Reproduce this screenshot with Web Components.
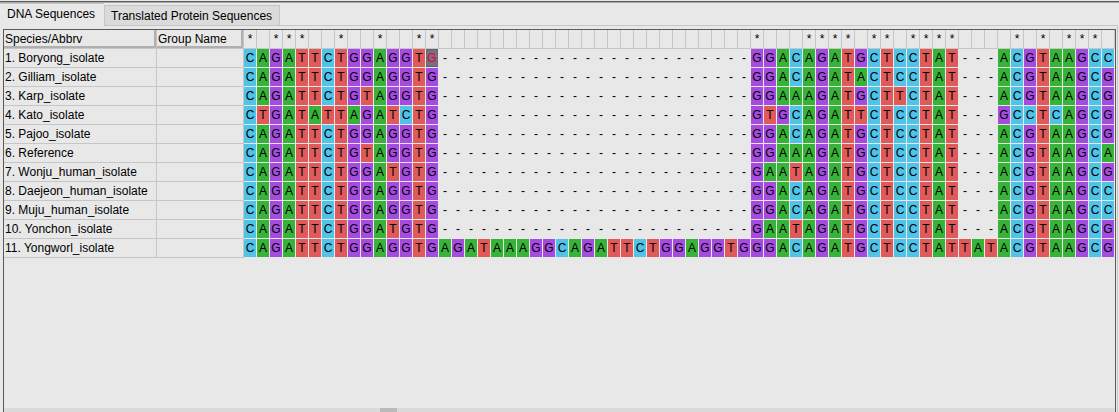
<!DOCTYPE html>
<html lang="en">
<head>
<meta charset="utf-8">
<title>Alignment Explorer</title>
<style>
html, body { height: 100%; margin: 0; }
body { background: #e8e8e8; color: #000; font: 12px/18px "Liberation Sans", Arial, sans-serif; overflow: hidden; }
</style>
</head>
<body>
<alignment-window>
  <tab-strip slot="tabs">
    <tab-item selected>DNA Sequences</tab-item>
    <tab-item>Translated Protein Sequences</tab-item>
  </tab-strip>
  <sequence-grid></sequence-grid>
  <scroll-track slot="scroll"></scroll-track>
</alignment-window>

<template id="window-template">
<style>
:host { display: flex; flex-direction: column; height: 100vh; box-sizing: border-box; padding-top: 1px; }
.rule { height: 1px; flex: none; background: #5c5e5c; border-bottom: 1px solid #a9a9a9; }
.panel { flex: 1; min-height: 0; display: flex; border-right: 1px solid #c6c6c6; margin-right: 1px; padding: 3px 1px 0 3px; }
.frame { flex: 1; min-width: 0; display: flex; flex-direction: column; box-sizing: border-box; border: 1px solid #5a5a5a; border-bottom: 0; overflow: hidden; }
.content { flex: 1; min-height: 0; overflow: hidden; }
</style>
<div class="rule"></div>
<slot name="tabs"></slot>
<div class="panel"><div class="frame"><div class="content"><slot></slot></div><slot name="scroll"></slot></div></div>
</template>

<template id="strip-template">
<style>
:host { display: flex; flex: none; height: 23px; margin-right: 1px; }
.rest { flex: 1; border-bottom: 1px solid #c6c6c6; }
</style>
<slot></slot><div class="rest"></div>
</template>

<template id="tab-template">
<style>
:host { display: flex; align-items: flex-end; border-bottom: 1px solid #c6c6c6; }
:host([selected]) { align-items: stretch; border-bottom-color: transparent; }
button { font: inherit; color: inherit; height: 20px; padding: 0 7px 0 6px; border: 1px solid #c6c6c6; border-bottom: 0; background: #dbdbdb; white-space: nowrap; }
:host([selected]) button { height: 22px; padding: 0 9px 2px 7px; border: 0; border-top: 1px solid #c6c6c6; background: #e8e8e8; }
</style>
<button type="button" role="tab"><slot></slot></button>
</template>

<template id="grid-template">
<style>
:host { display: block; }
table { border-collapse: separate; border-spacing: 0; table-layout: fixed; width: 1111px; }
.name { width: 153px; } .group { width: 87px; } .site { width: 13px; }
th, td { box-sizing: border-box; height: 19px; padding: 0; font-weight: normal; line-height: 18px; white-space: nowrap; border: solid #c6c6c6; border-width: 0 1px 1px 0; text-align: left; }
.label { padding-left: 1px; }
thead .label { box-shadow: inset -2px -2px #b0b0b0; }
.mark, .base { text-align: center; }
.base { border-color: #e8e8e8; background-clip: padding-box; }
.A { background-color: #37b437; } .C { background-color: #4fc3e8; }
.G { background-color: #a64be0; } .T { background-color: #e05a5a; }
.current { background: linear-gradient(#746f83, #746f83) 1px 1px / 10px 16px no-repeat padding-box, repeating-linear-gradient(#5e6663 0 2px, #746f83 2px 4px) padding-box; color: #f00020; }
</style>
<table><colgroup><col class="name"><col class="group"></colgroup><thead><tr></tr></thead><tbody></tbody></table>
</template>

<template id="track-template">
<style>
:host { display: grid; flex: none; height: 4px; grid-template-columns: 376fr 17px 718fr; background: #dadada; }
.thumb { grid-column: 2; background: #bababa; }
</style>
<div class="thumb"></div>
</template>

<script>
function define(name, templateId, setup) {
  customElements.define(name, class extends HTMLElement {
    constructor() {
      super();
      const root = this.attachShadow({ mode: "open" });
      root.append(document.getElementById(templateId).content.cloneNode(true));
      if (setup) setup(root, this);
    }
  });
}

const GAP = "-".repeat(24);
const ROWS = [
  ["Boryong_isolate", "CAGATTCTGGAGGTG" + GAP + "GGACAGATGCTCCTAT---ACGTAAGCC"],
  ["Gilliam_isolate", "CAGATTCTGGAGGTG" + GAP + "GGACAGATACTCCTAT---ACGTAAGCG"],
  ["Karp_isolate", "CAGATTCTGTAGGTG" + GAP + "GGAAAGATGCTTCTAT---ACGTAAGCG"],
  ["Kato_isolate", "CTGATATTAGATCTG" + GAP + "GTGCAGATTCTCCTAT---GCCTCAGCG"],
  ["Pajoo_isolate", "CAGATTCTGGAGGTG" + GAP + "GGACAGATGCTCCTAT---ACGTAAGCG"],
  ["Reference", "CAGATTCTGTAGGTG" + GAP + "GGAAAGATGCTCCTAT---ACGTAAGCA"],
  ["Wonju_human_isolate", "CAGATTCTGGATGTG" + GAP + "GAATAGATGCTCCTAT---ACGTAAGCG"],
  ["Daejeon_human_isolate", "CAGATTCTGGAGGTG" + GAP + "GGACAGATGCTCCTAT---ACGTAAGCC"],
  ["Muju_human_isolate", "CAGATTCTGGAGGTG" + GAP + "GGACAGATGCTCCTAT---ACGTAAGCC"],
  ["Yonchon_isolate", "CAGATTCTGGATGTG" + GAP + "GAATAGATGCTCCTAT---ACGTAAGCG"],
  ["Yongworl_isolate", "CAGATTCTGGAGGTGAGATAAAGGCAGATTCTGGAGGTGGGACAGATGCTCCTATTATACGTAAGCG"]
];
const CURRENT = { row: 0, site: 14 };

function cell(tag, className, text) {
  const el = document.createElement(tag);
  el.className = className;
  el.textContent = text;
  return el;
}

define("alignment-window", "window-template");
define("tab-strip", "strip-template");
define("tab-item", "tab-template", (root, host) => {
  root.querySelector("button").setAttribute("aria-selected", host.hasAttribute("selected"));
});
define("scroll-track", "track-template");
define("sequence-grid", "grid-template", root => {
  const head = root.querySelector("thead tr");
  const body = root.querySelector("tbody");
  const cols = root.querySelector("colgroup");
  head.append(cell("th", "label", "Species/Abbrv"), cell("th", "label", "Group Name"));
  for (let i = 0; i < ROWS[0][1].length; i++) {
    cols.append(cell("col", "site", ""));
    // A site is starred when every sequence carries the same base there.
    const base = ROWS[0][1][i];
    const conserved = base !== "-" && ROWS.every(r => r[1][i] === base);
    head.append(cell("th", "mark", conserved ? "*" : ""));
  }
  ROWS.forEach(([name, bases], r) => {
    const tr = document.createElement("tr");
    tr.append(cell("th", "label", `${r + 1}. ${name}`), cell("td", "label", ""));
    [...bases].forEach((b, i) => {
      const current = r === CURRENT.row && i === CURRENT.site;
      tr.append(cell("td", "base " + (b === "-" ? "" : b) + (current ? " current" : ""), b));
    });
    body.append(tr);
  });
});
</script>
</body>
</html>
